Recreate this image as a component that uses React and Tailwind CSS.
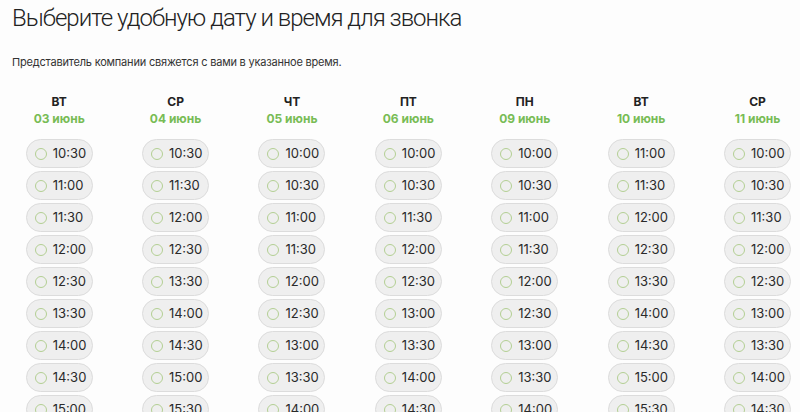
const days = [
  { day: 'ВТ', date: '03 июнь', slots: ['10:30', '11:00', '11:30', '12:00', '12:30', '13:30', '14:00', '14:30', '15:00'] },
  { day: 'СР', date: '04 июнь', slots: ['10:30', '11:30', '12:00', '12:30', '13:30', '14:00', '14:30', '15:00', '15:30'] },
  { day: 'ЧТ', date: '05 июнь', slots: ['10:00', '10:30', '11:00', '11:30', '12:00', '12:30', '13:00', '13:30', '14:00'] },
  { day: 'ПТ', date: '06 июнь', slots: ['10:00', '10:30', '11:30', '12:00', '12:30', '13:00', '13:30', '14:00', '14:30'] },
  { day: 'ПН', date: '09 июнь', slots: ['10:00', '10:30', '11:00', '11:30', '12:00', '12:30', '13:00', '13:30', '14:00'] },
  { day: 'ВТ', date: '10 июнь', slots: ['11:00', '11:30', '12:00', '12:30', '13:30', '14:00', '14:30', '15:00', '15:30'] },
  { day: 'СР', date: '11 июнь', slots: ['10:00', '10:30', '11:30', '12:00', '12:30', '13:00', '13:30', '14:00', '14:30'] },
]

const Slot = ({ time }) => (
  <button className="flex h-[29px] w-[67px] items-center gap-[6px] rounded-full border border-[#dcdcdc] bg-[#efefef] pl-[8px] text-[13px] text-[#2a2a2a]">
    <span className="h-[12px] w-[12px] shrink-0 rounded-full border-[1.5px] border-[#b3cf93]"></span>
    <span>{time}</span>
  </button>
)

export default function App() {
  return (
    <div className="h-[412px] w-[800px] overflow-hidden bg-[#fdfdfd] font-['Inter',_'Noto_Sans',sans-serif] text-[#1e1e1e]">
      <h1 className="pl-[12px] pt-[3px] font-['Roboto',_sans-serif] text-[24px] font-light leading-[30px] tracking-[-1px] text-[#222]">
        Выберите удобную дату и время для звонка
      </h1>
      <p className="mt-[21px] pl-[12px] text-[11px] leading-[16px] tracking-[-0.2px] text-[#333]">
        Представитель компании свяжется с вами в указанное время.
      </p>

      <div className="mt-[24px] grid w-[815px] grid-cols-[repeat(7,116.4px)] pl-[1px]">
        {days.map((d, i) => (
          <div key={i} className="flex flex-col items-center">
            <div className="text-[12px] font-bold leading-[16px] text-[#222]">{d.day}</div>
            <div className="mt-[1px] text-[12px] font-bold leading-[16px] text-[#78bc55]">{d.date}</div>
            <div className="mt-[12px] flex flex-col gap-[3px]">
              {d.slots.map((t) => (
                <Slot key={t} time={t} />
              ))}
            </div>
          </div>
        ))}
      </div>
    </div>
  )
}
